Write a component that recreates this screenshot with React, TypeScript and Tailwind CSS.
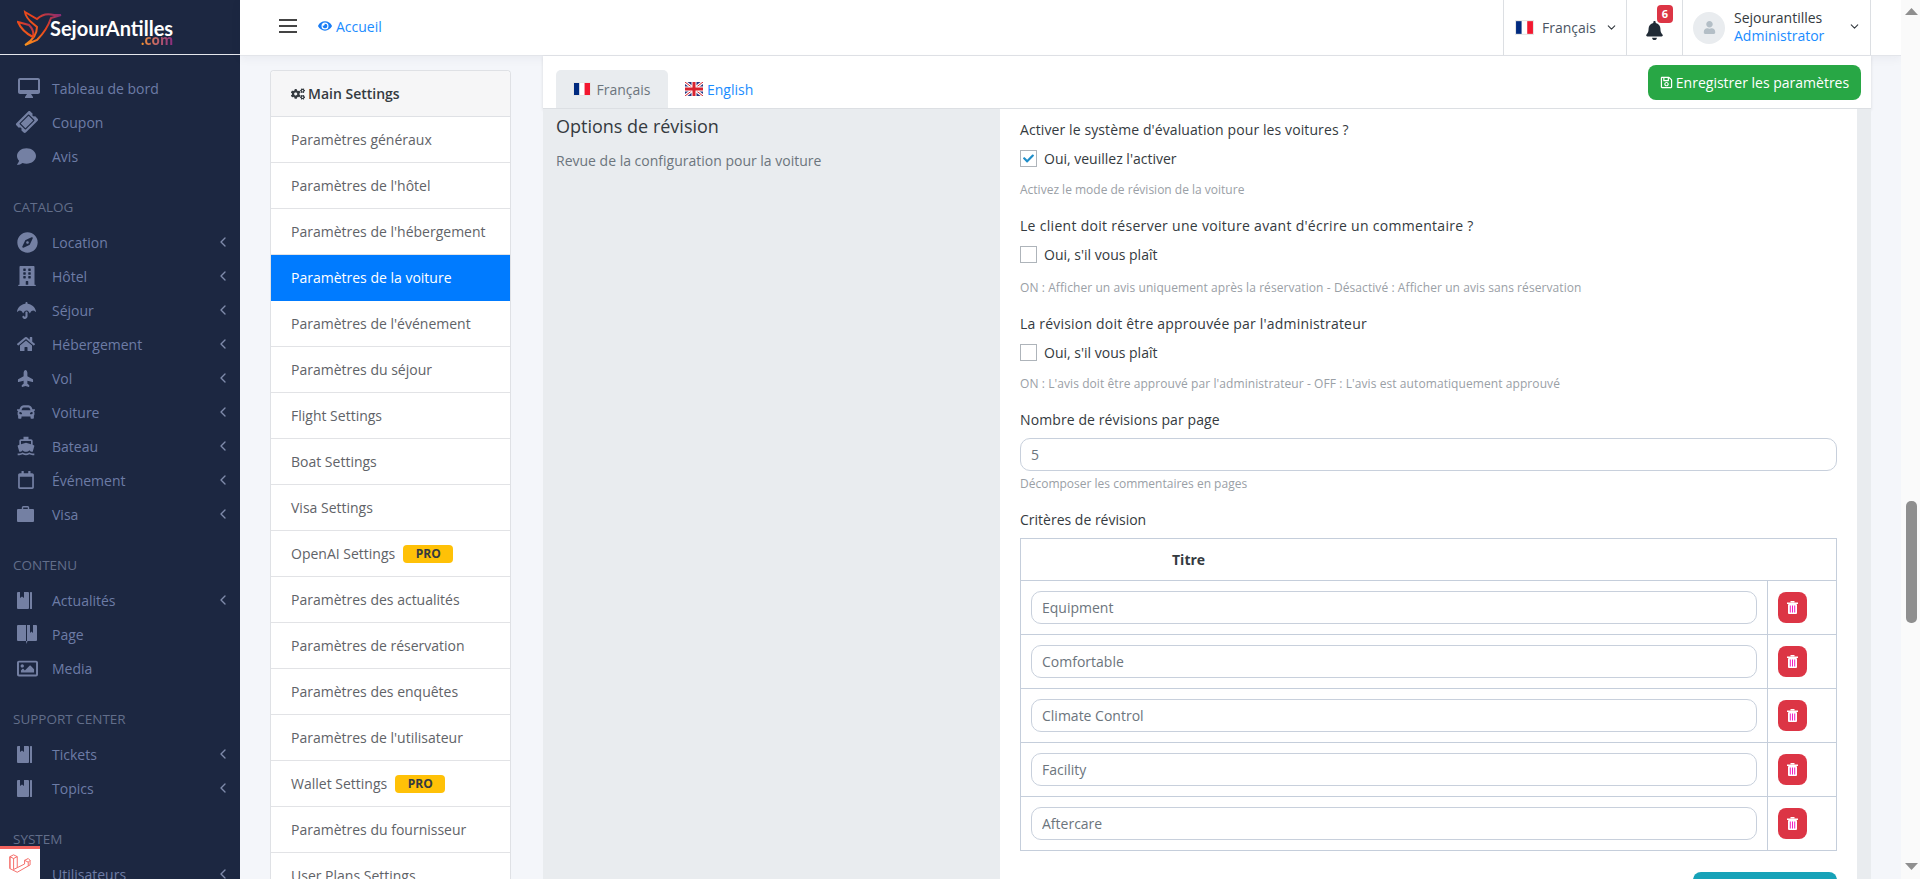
import React from "react";
import { FaBell, FaBuilding, FaCar, FaCogs, FaComment, FaCompass, FaEye, FaHome, FaPlane, FaRegCalendar, FaRegImage, FaRegSave, FaTicketAlt, FaUmbrella, FaUser, FaCheck } from "react-icons/fa";
import { MdOutlineDesktopMac, MdDirectionsBoat } from "react-icons/md";
import { ChevronLeft, ChevronDown } from "lucide-react";

type Item = { label: string; icon: React.ReactNode; chevron?: boolean };
const ic = "text-[#7480a3]";

function BookIcon() {
  return (
    <svg width="16" height="17" viewBox="0 0 16 17" className="shrink-0">
      <rect x="0" y="0" width="12" height="17" rx="1" fill="#7480a3" />
      <rect x="13" y="0" width="2" height="17" rx="0.5" fill="#7480a3" />
      <path d="M3 0 H7 V6 L5 4.5 L3 6Z" fill="#1c2741" />
    </svg>
  );
}

function PageIcon() {
  return (
    <svg width="20" height="20" viewBox="0 0 20 20" className="shrink-0">
      <path d="M1 1 H9 V17 H1 Q0 17 0 16 V2 Q0 1 1 1Z" fill="#7480a3" />
      <path d="M10 1 H19 Q20 1 20 2 V16 Q20 17 19 17 H10Z" fill="#7480a3" />
      <path d="M13 1 H16 V9 L14.5 7.5 L13 9Z" fill="#1c2741" />
      <path d="M9 17 H10.5 L9.5 20Z" fill="#7480a3" />
    </svg>
  );
}

function CaseIcon() {
  return (
    <svg width="17" height="16" viewBox="0 0 17 16" className="shrink-0">
      <rect x="0" y="3" width="17" height="13" rx="1" fill="#7480a3" />
      <path d="M5.5 3 V1.5 Q5.5 0.7 6.3 0.7 H10.7 Q11.5 0.7 11.5 1.5 V3" fill="none" stroke="#7480a3" strokeWidth="1.4" />
    </svg>
  );
}

const top: Item[] = [
  { label: "Tableau de bord", icon: <MdOutlineDesktopMac size={24} className={ic} /> },
  { label: "Coupon", icon: <FaTicketAlt size={20} className={ic + " -rotate-45"} /> },
  { label: "Avis", icon: <FaComment size={19} className={ic} /> },
];
const catalog: Item[] = [
  { label: "Location", icon: <FaCompass size={21} className={ic} />, chevron: true },
  { label: "Hôtel", icon: <FaBuilding size={20} className={ic} />, chevron: true },
  { label: "Séjour", icon: <FaUmbrella size={19} className={ic} />, chevron: true },
  { label: "Hébergement", icon: <FaHome size={18} className={ic} />, chevron: true },
  { label: "Vol", icon: <FaPlane size={17} className={ic + " -rotate-90"} />, chevron: true },
  { label: "Voiture", icon: <FaCar size={18} className={ic} />, chevron: true },
  { label: "Bateau", icon: <MdDirectionsBoat size={20} className={ic + " -ml-[1px]"} />, chevron: true },
  { label: "Événement", icon: <FaRegCalendar size={18} className={ic} />, chevron: true },
  { label: "Visa", icon: <CaseIcon />, chevron: true },
];
const content: Item[] = [
  { label: "Actualités", icon: <BookIcon />, chevron: true },
  { label: "Page", icon: <PageIcon /> },
  { label: "Media", icon: <FaRegImage size={21} className={ic} /> },
];
const support: Item[] = [
  { label: "Tickets", icon: <BookIcon />, chevron: true },
  { label: "Topics", icon: <BookIcon />, chevron: true },
];
const system: Item[] = [{ label: "Utilisateurs", icon: <FaUser size={16} className={ic} />, chevron: true }];

function NavRow({ item }: { item: Item }) {
  return (
    <div className="flex h-[34px] items-center pl-[17px] pr-[9px] text-[14px] text-[#6d7ca6]">
      <span className="flex w-[35px] shrink-0 items-center">{item.icon}</span>
      <span className="flex-1">{item.label}</span>
      {item.chevron && <ChevronLeft size={16} className="text-[#7f8bab]" />}
    </div>
  );
}

function NavGroup({ title, items }: { title: string; items: Item[] }) {
  return (
    <div>
      <div className="pb-[9px] pl-[13px] pt-[25px] text-[13.5px] leading-[18px] text-[#626e8a]">{title}</div>
      {items.map((i) => (
        <NavRow key={i.label} item={i} />
      ))}
    </div>
  );
}

function Logo() {
  return (
    <div className="flex h-[55px] items-start border-b border-[#e4e6ec] pl-[17px]">
      <svg width="46" height="37" viewBox="0 0 46 37" className="mt-[10px] shrink-0" fill="none">
        <defs>
          <linearGradient id="lg" x1="0" y1="1" x2="1" y2="0">
            <stop offset="0" stopColor="#f7931e" />
            <stop offset="0.55" stopColor="#e8401c" />
            <stop offset="1" stopColor="#7b2a7e" />
          </linearGradient>
        </defs>
        <path d="M8 2 L20 9 C24 5 30 3 37 5 L44 5 L34 8 C32 14 28 22 20 30 L8 35 C16 30 20 24 20 17 C16 13 9 10 8 2Z" stroke="url(#lg)" strokeWidth="2" />
        <path d="M1 12 L12 15 C16 19 17 23 16 27 C10 24 4 19 1 12Z" stroke="url(#lg)" strokeWidth="2" />
      </svg>
      <div className="-ml-[13px] flex flex-col items-end">
        <span className="mt-[20px] text-[20px] font-bold leading-[16px] text-white [font-family:'Lato',sans-serif]">SejourAntilles</span>
        <span className="bg-gradient-to-r from-[#f7931e] to-[#8a2a7e] bg-clip-text text-[13.5px] font-bold leading-[9px] text-transparent">.com</span>
      </div>
    </div>
  );
}

function FlagFR({ w = 18, h = 14 }: { w?: number; h?: number }) {
  return (
    <svg width={w} height={h} viewBox="0 0 18 14" className="shrink-0">
      <rect width="18" height="14" fill="#e5e5e5" />
      <rect x="1" y="1" width="5.4" height="12" fill="#002a7f" />
      <rect x="6.4" y="1" width="5.2" height="12" fill="#fff" />
      <rect x="11.6" y="1" width="5.4" height="12" fill="#f31830" />
    </svg>
  );
}

function FlagUK() {
  return (
    <svg width="18" height="14" viewBox="0 0 18 14" className="shrink-0">
      <rect width="18" height="14" fill="#26357f" />
      <path d="M0 0 L18 14 M18 0 L0 14" stroke="#fff" strokeWidth="3" />
      <path d="M0 0 L18 14 M18 0 L0 14" stroke="#d8232f" strokeWidth="1" />
      <path d="M9 0 V14 M0 7 H18" stroke="#fff" strokeWidth="5" />
      <path d="M9 0 V14 M0 7 H18" stroke="#d8232f" strokeWidth="3" />
    </svg>
  );
}

function Header() {
  return (
    <header className="flex h-[56px] shrink-0 items-stretch border-b border-[#e3e5ea] bg-white shadow-[0_2px_10px_rgba(30,40,70,0.06)]">
      <div className="flex flex-1 items-center pb-[3px] pl-[39px]">
        <div className="flex w-[18px] flex-col gap-[4px]">
          <span className="h-[2px] bg-[#444]" />
          <span className="h-[2px] bg-[#444]" />
          <span className="h-[2px] bg-[#444]" />
        </div>
        <FaEye size={14} className="ml-[21px] text-[#1a7df5]" />
        <span className="ml-[4px] text-[14px] text-[#1a8cff]">Accueil</span>
      </div>
      <div className="flex w-[123px] items-center border-l border-[#dcdfe3] pl-[11px] text-[14px] text-[#4b5563]">
        <FlagFR w={19} h={15} />
        <span className="ml-[8px]">Français</span>
        <ChevronDown size={13} className="ml-[9px] text-[#343a40]" />
      </div>
      <div className="relative flex w-[56px] items-center justify-center border-l border-[#dcdfe3]">
        <FaBell size={19} className="mt-[6px] text-[#212b36]" />
        <span className="absolute left-[30px] top-[5px] flex h-[18px] w-[16px] items-center justify-center rounded-[4px] bg-[#dc3545] text-[11px] font-bold text-white">6</span>
      </div>
      <div className="flex w-[189px] items-center border-x border-[#dcdfe3] pl-[10px]">
        <span className="flex h-[32px] w-[32px] items-center justify-center rounded-full bg-[#e9ecef]">
          <FaUser size={13} className="text-[#b3bec6]" />
        </span>
        <span className="mb-[1px] ml-[9px] flex flex-1 flex-col text-[14px] leading-[18px]">
          <span className="text-[#343a40]">Sejourantilles</span>
          <span className="text-[#1a8cff]">Administrator</span>
        </span>
        <ChevronDown size={13} className="mb-[2px] mr-[9px] text-[#343a40]" />
      </div>
      <div className="w-[30px]" />
    </header>
  );
}

const settings: { label: string; pro?: boolean; active?: boolean }[] = [
  { label: "Paramètres généraux" },
  { label: "Paramètres de l'hôtel" },
  { label: "Paramètres de l'hébergement" },
  { label: "Paramètres de la voiture", active: true },
  { label: "Paramètres de l'événement" },
  { label: "Paramètres du séjour" },
  { label: "Flight Settings" },
  { label: "Boat Settings" },
  { label: "Visa Settings" },
  { label: "OpenAI Settings", pro: true },
  { label: "Paramètres des actualités" },
  { label: "Paramètres de réservation" },
  { label: "Paramètres des enquêtes" },
  { label: "Paramètres de l'utilisateur" },
  { label: "Wallet Settings", pro: true },
  { label: "Paramètres du fournisseur" },
  { label: "User Plans Settings" },
];

function SettingsList() {
  return (
    <div className="mt-[14px] w-[241px] shrink-0 rounded-t-[4px] border border-b-0 border-[#dfe1e5] bg-white text-[14px]">
      <div className="flex h-[46px] items-center gap-[3px] rounded-t-[4px] border-b border-[#dfe1e5] bg-[#f6f6f7] pl-[20px] font-semibold text-[#343a40]">
        <FaCogs size={14} />
        <span>Main Settings</span>
      </div>
      {settings.map((s) => (
        <div
          key={s.label}
          className={
            s.active
              ? "flex h-[46px] items-center border-b border-[#007bff] bg-[#007bff] pl-[20px] font-medium text-white"
              : "flex h-[46px] items-center border-b border-[#e2e3e6] pl-[20px] text-[#5f6368]"
          }
        >
          <span>{s.label}</span>
          {s.pro && (
            <span className="ml-[8px] flex h-[18px] w-[50px] items-center justify-center rounded-[4px] bg-[#ffc107] text-[12px] font-bold text-[#343a40]">PRO</span>
          )}
        </div>
      ))}
    </div>
  );
}

function CheckRow({ checked, label }: { checked?: boolean; label: string }) {
  return (
    <div className="mt-[8px] flex h-[21px] items-center gap-[7px] text-[14px] text-[#343a40]">
      <span className="flex h-[17px] w-[17px] items-center justify-center border border-[#aeb4ba] bg-white">
        {checked && <FaCheck size={11} className="text-[#1f8ec9]" />}
      </span>
      <span>{label}</span>
    </div>
  );
}

function TextBox({ value, className }: { value: string; className: string }) {
  return (
    <input
      readOnly
      value={value}
      className={"block w-full rounded-[10px] border border-[#c8d0dc] bg-white px-[10px] text-[14px] text-[#6c757d] outline-none " + className}
    />
  );
}

function Trash() {
  return (
    <button className="flex h-[31px] w-[29px] items-center justify-center rounded-[8px] bg-[#dc3545]">
      <svg width="11" height="13" viewBox="0 0 11 13">
        <rect x="0" y="1.5" width="11" height="1.5" fill="#fff" />
        <rect x="3.5" y="0" width="4" height="1.5" fill="#fff" />
        <rect x="1" y="3" width="9" height="10" rx="1" fill="#fff" />
        <rect x="2.8" y="4.5" width="1" height="7" fill="#f01fc0" />
        <rect x="5" y="4.5" width="1" height="7" fill="#f01fc0" />
        <rect x="7.2" y="4.5" width="1" height="7" fill="#f01fc0" />
      </svg>
    </button>
  );
}

const criteria = ["Equipment", "Comfortable", "Climate Control", "Facility", "Aftercare"];

function Form() {
  return (
    <div className="flex-1 bg-white pl-[20px] pr-[20px] pt-[10px]">
      <div className="text-[14px] leading-[21px] tracking-[0.1px] text-[#343a40]">Activer le système d'évaluation pour les voitures ?</div>
      <CheckRow checked label="Oui, veuillez l'activer" />
      <div className="mt-[12px] text-[12px] leading-[18px] text-[#9aa0a6]">Activez le mode de révision de la voiture</div>

      <div className="mt-[16px] text-[14px] leading-[21px] tracking-[0.3px] text-[#343a40]">Le client doit réserver une voiture avant d'écrire un commentaire ?</div>
      <CheckRow label="Oui, s'il vous plaît" />
      <div className="mt-[14px] text-[12px] leading-[18px] tracking-[0.08px] text-[#9aa0a6]">ON : Afficher un avis uniquement après la réservation - Désactivé : Afficher un avis sans réservation</div>

      <div className="mt-[16px] text-[14px] leading-[21px] tracking-[0.2px] text-[#343a40]">La révision doit être approuvée par l'administrateur</div>
      <CheckRow label="Oui, s'il vous plaît" />
      <div className="mt-[12px] text-[12px] leading-[18px] tracking-[0.08px] text-[#9aa0a6]">ON : L'avis doit être approuvé par l'administrateur - OFF : L'avis est automatiquement approuvé</div>

      <div className="mt-[16px] text-[14px] leading-[21px] tracking-[0.1px] text-[#343a40]">Nombre de révisions par page</div>
      <TextBox value="5" className="mt-[8px] h-[33px]" />
      <div className="mt-[4px] text-[12px] leading-[18px] text-[#9aa0a6]">Décomposer les commentaires en pages</div>

      <div className="mt-[16px] text-[14px] leading-[21px] text-[#343a40]">Critères de révision</div>
      <table className="mt-[8px] w-full border-collapse border border-[#c5cedb] text-[14px]">
        <thead>
          <tr className="h-[42px] border-b border-[#c5cedb]">
            <th colSpan={2} className="pl-[151px] text-left font-bold text-[#343a40]">Titre</th>
          </tr>
        </thead>
        <tbody>
          {criteria.map((c) => (
            <tr key={c} className="h-[54px] border-b border-[#c5cedb]">
              <td className="border-r border-[#c5cedb] px-[10px] align-middle">
                <TextBox value={c} className="h-[33px]" />
              </td>
              <td className="w-[69px] pl-[10px] align-middle">
                <Trash />
              </td>
            </tr>
          ))}
        </tbody>
      </table>
      <div className="mt-[21px] flex justify-end">
        <div className="h-[40px] w-[144px] rounded-[8px] bg-[#17a2b8]" />
      </div>
    </div>
  );
}

function Panel() {
  return (
    <div className="flex min-w-0 flex-1 flex-col">
      <div className="flex h-[53px] shrink-0 items-end justify-between border-b border-[#dcdfe3] bg-white pl-[13px] pr-[10px] shadow-[0_1px_3px_rgba(0,0,0,0.12)]">
        <div className="flex items-end text-[14px]">
          <div className="flex h-[38px] w-[112px] items-center justify-center gap-[5px] rounded-t-[5px] bg-[#e9ecef] text-[#6c757d]">
            <FlagFR />
            <span>Français</span>
          </div>
          <div className="flex h-[38px] items-center gap-[4px] pl-[17px] text-[#1a8cff]">
            <FlagUK />
            <span>English</span>
          </div>
        </div>
        <button className="mb-[8px] flex h-[35px] w-[213px] items-center justify-center gap-[3px] rounded-[8px] bg-[#28a745] text-[14px] text-white">
          <FaRegSave size={13} />
          <span>Enregistrer les paramètres</span>
        </button>
      </div>
      <div className="flex min-h-0 flex-1 bg-[#e9ecef] pr-[14px]">
        <div className="w-[457px] shrink-0 pl-[13px] pt-[5px]">
          <div className="text-[18px] leading-[24px] text-[#343a40]">Options de révision</div>
          <div className="mt-[12px] text-[14px] leading-[21px] text-[#6c757d]">Revue de la configuration pour la voiture</div>
        </div>
        <Form />
      </div>
    </div>
  );
}

function Scrollbar() {
  return (
    <div className="flex w-[19px] shrink-0 flex-col items-center bg-[#fafafa] pl-[1px]">
      <svg width="13" height="8" viewBox="0 0 13 8" className="mt-[8px]"><path d="M6.5 0 L13 7 H0Z" fill="#8f8f8f" /></svg>
      <div className="mt-[485px] h-[122px] w-[11px] rounded-[5px] bg-[#8f8f8f]" />
      <div className="flex-1" />
      <svg width="13" height="8" viewBox="0 0 13 8" className="mb-[8px]"><path d="M6.5 7 L13 0 H0Z" fill="#8f8f8f" /></svg>
    </div>
  );
}

export default function App() {
  return (
    <div className="relative flex h-[879px] w-full overflow-hidden bg-[#f4f6fa] [font-family:'Open_Sans',sans-serif]">
      <aside className="w-[240px] shrink-0 overflow-hidden bg-[#1c2741]">
        <Logo />
        <div className="pt-[16px]">
          {top.map((i) => (
            <NavRow key={i.label} item={i} />
          ))}
        </div>
        <NavGroup title="CATALOG" items={catalog} />
        <NavGroup title="CONTENU" items={content} />
        <NavGroup title="SUPPORT CENTER" items={support} />
        <NavGroup title="SYSTEM" items={system} />
      </aside>
      <div className="flex min-w-0 flex-1 flex-col">
        <Header />
        <main className="flex min-h-0 flex-1 gap-[32px] pl-[30px] pr-[30px]">
          <SettingsList />
          <Panel />
        </main>
      </div>
      <Scrollbar />
      <div className="absolute bottom-0 left-0 flex h-[33px] w-[40px] items-center justify-center border-t-[3px] border-[#f4645f] bg-white">
        <svg width="22" height="22" viewBox="0 0 24 24" fill="none" stroke="#f4645f" strokeWidth="1">
          <path d="M1 4 L5 2 L9 4 V16 L17 12 V8 L21 6 L23 8 V13 L9 21 L1 17Z M1 4 V17 M9 4 L5 6 L1 4 M5 6 V18 M17 8 L21 10 L23 8 M21 10 V14 M9 16 L5 18" />
        </svg>
      </div>
    </div>
  );
}
